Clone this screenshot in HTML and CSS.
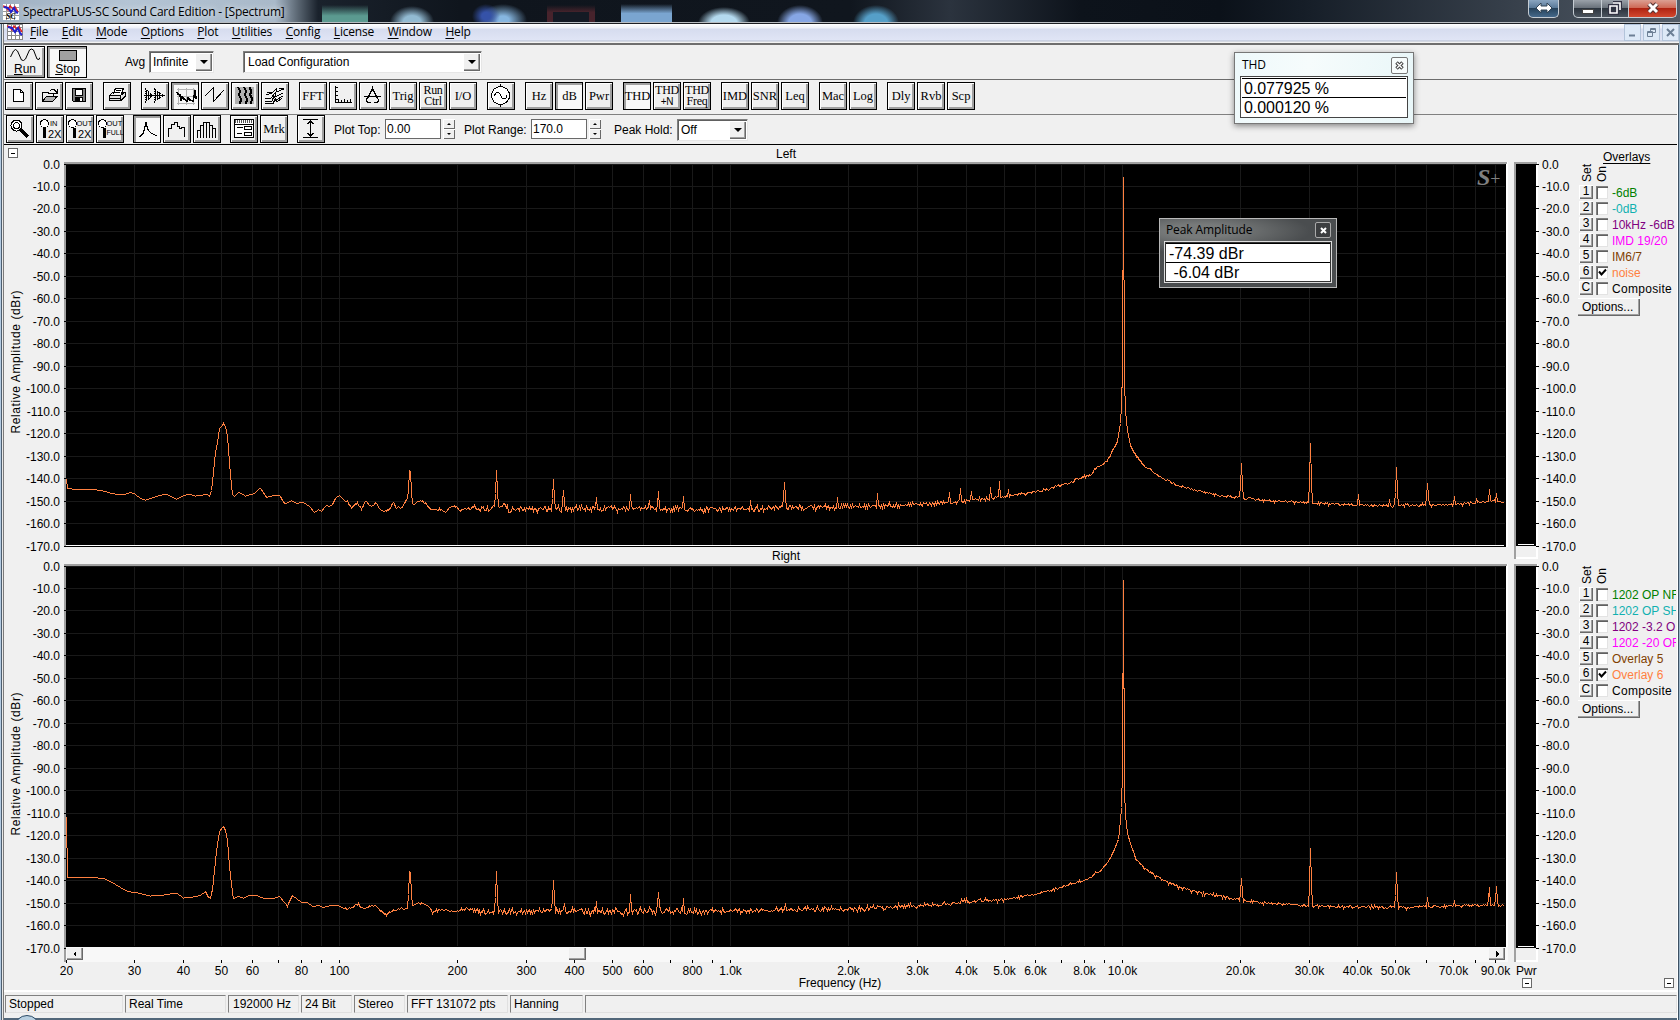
FILE: index.html
```html
<!DOCTYPE html>
<html lang="en">

<head>
    <meta charset="UTF-8">
    <title>SpectraPLUS-SC Sound Card Edition - [Spectrum]</title>
    <link rel="stylesheet" href="styles.css">
</head>

<body>
    <div class="window">
        <!-- Title bar -->
        <header class="titlebar">
            <svg class="app-icon" width="16" height="16" viewBox="0 0 16 16">
                <rect width="16" height="16" fill="#fff" />
                <path d="M3.5 0v16M7.5 0v16M11.5 0v16M0 3.5h16M0 7.5h16M0 11.5h16" stroke="#999" />
                <path d="M0 2l3 1 2 3 2-4 3 3 2-2 3 5" fill="none" stroke="#e02020" stroke-width="1.5" />
                <path d="M1 3l4 1 3 4 3-4 2 4 2 1" fill="none" stroke="#2020d0" stroke-width="2" />
                <text x="3" y="15" class="icon-sc">SC</text>
            </svg>
            <span class="title">SpectraPLUS-SC Sound Card Edition - [Spectrum]</span>
            <div class="caption-buttons">
                <div class="cap resize">
                    <svg width="18" height="12" viewBox="0 0 18 12"><path d="M1 6l5-5v3h6V1l5 5-5 5V8H6v3z" fill="#fff" stroke="#345" /></svg>
                </div>
                <div class="cap minimize">
                    <svg width="14" height="14" viewBox="0 0 14 14"><rect x="1.5" y="8.5" width="11" height="4" fill="#fff" stroke="#444" /></svg>
                </div>
                <div class="cap restore">
                    <svg width="14" height="14" viewBox="0 0 14 14"><path d="M5 2h7v7M2 5h7v7H2z" fill="none" stroke="#334" stroke-width="4" /><path d="M5 2h7v7M2 5h7v7H2z" fill="none" stroke="#fff" stroke-width="1.6" /></svg>
                </div>
                <div class="cap close">
                    <svg width="14" height="12" viewBox="0 0 14 12"><path d="M3 2l8 8M11 2l-8 8" stroke="#533" stroke-width="5" /><path d="M3 2l8 8M11 2l-8 8" stroke="#fff" stroke-width="3" /></svg>
                </div>
            </div>
        </header>

        <!-- Menu -->
        <nav class="menubar">
            <svg class="app-icon" width="16" height="16" viewBox="0 0 16 16">
                <rect width="16" height="16" fill="#fff" />
                <path d="M.5 0v16M4.5 0v16M8.5 0v16M12.5 0v16M0 3.5h16M0 7.5h16M0 11.5h16M0 15.5h16M15.5 0v16M0 .5h16" stroke="#888" />
                <path d="M0 2l3 1 2 3 2-4 3 3 2-2 3 5" fill="none" stroke="#e02020" stroke-width="1.5" />
                <path d="M1 3l4 1 3 4 3-4 2 5 2 2" fill="none" stroke="#2020d0" stroke-width="2" />
            </svg>
            <ul class="menu">
                <li><u>F</u>ile</li>
                <li><u>E</u>dit</li>
                <li><u>M</u>ode</li>
                <li><u>O</u>ptions</li>
                <li><u>P</u>lot</li>
                <li><u>U</u>tilities</li>
                <li><u>C</u>onfig</li>
                <li><u>L</u>icense</li>
                <li><u>W</u>indow</li>
                <li><u>H</u>elp</li>
            </ul>
            <div class="mdi-buttons">
                <div class="mdi"><svg width="9" height="9"><path d="M1 7.5h6" stroke="#6c7f95" stroke-width="2" /></svg></div>
                <div class="mdi"><svg width="9" height="9"><path d="M3.5 3V.5h5v4H6M.5 3.5h5v5h-5zM3 1.5h6M0 4.5h6" fill="none" stroke="#6c7f95" /></svg></div>
                <div class="mdi"><svg width="9" height="9"><path d="M1 1l7 7M8 1L1 8" stroke="#6c7f95" stroke-width="2" /></svg></div>
            </div>
        </nav>

        <!-- Run / stop -->
        <div class="toolbar run-bar">
            <button class="big"><svg width="30" height="14" viewBox="0 0 30 14"><path d="M.5 9l3-6 2-1.5 2 1.5 4 9 2 .5 2-1.5 4-9 2-1 2 1 3.5 9 2 .5 1-2" fill="none" stroke="#000" /></svg><span><u>R</u>un</span></button>
            <button class="big pressed"><svg width="20" height="13"><rect x="1.5" y="1.5" width="17" height="10" fill="#a0a0a0" stroke="#000" /></svg><span><u>S</u>top</span></button>
            <label class="avg">Avg</label>
            <div class="select avg-select"><span>Infinite</span><i class="drop"></i></div>
            <div class="select config-select"><span>Load Configuration</span><i class="drop"></i></div>
        </div>

        <!-- Main tools -->
        <div class="toolbar tools">
            <button><svg class="icon"><path d="M7.5 6.5h7l3 3v9h-10zM14.5 6.5v3h3" fill="#fff" stroke="#000" /></svg></button>
            <button><svg class="icon"><path d="M6.5 18v-9h5l1 1h5v3" fill="#f0f0f0" stroke="#000" /><path d="M6.5 18.5l4-5.5h11l-5 5.5z" fill="#b0b0b0" stroke="#000" /><path d="M14 7.5l2-1h2l3 3M21.5 6v4H18" fill="none" stroke="#000" /></svg></button>
            <button><svg class="icon"><path d="M6.5 5.5h13v13h-12l-1-1z" fill="#808080" stroke="#000" /><path d="M9.5 6h7v6h-7z" fill="#fff" stroke="#000" /><path d="M9 14h8v5H9z" /><path d="M14 15h2v3h-2z" fill="#fff" /></svg></button>

            <button class="group"><svg class="icon"><path d="M9.5 11l2-6h8l-2 6" fill="#fff" stroke="#000" /><path d="M12 7.5h5M11 9.5h5" stroke="#000" /><path d="M5.5 12.5l3-3M18 9.5h3v4l-4 4M5.5 12.5h11v5h-11zM16.5 12.5l4-3" fill="#e0e0e0" stroke="#000" /><path d="M6 15.5h10" stroke="#000" /></svg></button>

            <button class="group"><svg class="icon"><path d="M2 12.5h21" stroke="#000" /><path d="M3 5.5v14l8-7zM12 5.5v14l9-7z" fill="none" stroke="#000" stroke-dasharray="1 1" /><path d="M4.5 7v11M6.5 8v9M8.5 10v5M13.5 7v11M15.5 8v9M17.5 10v5" stroke="#000" /></svg></button>
            <button class="pressed"><svg class="icon"><path d="M5.5 4v17M13.5 4v17M20.5 4v17M4 5.5h18M4 12.5h18M4 19.5h18" stroke="#b4b4b4" /><path d="M4 8l1 2 2 1 1 6 1-4 2 2 3 2 1-3 2 2 3 1 1-4 1-7 1 9" fill="none" stroke="#000" stroke-width="1.6" /></svg></button>
            <button><svg class="icon"><path d="M3 13l8-8v14l11-12" fill="none" stroke="#000" /></svg></button>
            <button><svg class="icon"><rect x="3" y="4" width="19" height="17" fill="#b0b0b0" /><path d="M6 4l2 4-1 4 2 4-1 5M12 4l2 4-1 4 2 4-1 5M18 4l1 5-1 3 2 3-1 6" fill="none" stroke="#000" stroke-width="2" /></svg></button>
            <button><svg class="icon"><path d="M4 12l6-2 4-4v3l8-3M3 15h6l4-5v4l8-4M3 18h7l2-5 2 4 7-4M3 20.5h8l2-4 2 2 5-3M5 9.5h6M17 5.5h5" fill="none" stroke="#000" /></svg></button>

            <button class="group">FFT</button>
            <button><svg class="icon"><path d="M5.5 3v16.5H22M5 4.5h3M5 8.5h3M5 12.5h3M5 16.5h3M8.5 19v-3M11.5 19v-2M14.5 19v-3M17.5 19v-2M20.5 19v-3" fill="none" stroke="#000" /></svg></button>
            <button><svg class="icon"><path d="M12.5 3v4M4 13.5h17M12.5 6l-5 9q-2 3 0 4l3 1M12.5 6l5 9q2 3 0 4l-3 1M10 9.5l2.5-3 2.5 3" fill="none" stroke="#000" stroke-width="1.3" /></svg></button>
            <button>Trig</button>
            <button class="two"><span>Run<br>Ctrl</span></button>
            <button>I/O</button>

            <button class="group"><svg class="icon"><circle cx="12.5" cy="12.5" r="9" fill="#fff" stroke="#000" /><path d="M12.5 1v3M12.5 21v3M6 13l2-3 2-1 2 2 2 4 2 1 2-1 1-3" fill="none" stroke="#000" /></svg></button>

            <button class="group">Hz</button>
            <button class="pressed">dB</button>
            <button>Pwr</button>

            <button class="group pressed">THD</button>
            <button class="two"><span>THD<br><small>+N</small></span></button>
            <button class="two"><span>THD<br>Freq</span></button>

            <button class="group">IMD</button>
            <button>SNR</button>
            <button>Leq</button>

            <button class="group">Mac</button>
            <button>Log</button>

            <button class="group">Dly</button>
            <button>Rvb</button>
            <button>Scp</button>
        </div>

        <!-- Zoom and plot range -->
        <div class="toolbar plot-bar">
            <button><svg class="icon"><circle cx="9.5" cy="9.5" r="5.5" fill="#fff" stroke="#000" /><circle cx="9.5" cy="9.5" r="3" fill="none" stroke="#000" /><path d="M13 13l8 8" stroke="#000" stroke-width="3" /></svg></button>
            <button><svg class="icon"><circle cx="7.5" cy="7.5" r="4" fill="#fff" stroke="#000" /><path d="M7.5 12v10" stroke="#000" stroke-width="3" /><text x="13" y="10" class="zoom-small">IN</text><text x="11" y="22" class="zoom-big">2X</text></svg></button>
            <button><svg class="icon"><circle cx="5.5" cy="7.5" r="4" fill="#fff" stroke="#000" /><path d="M7.5 12v10" stroke="#000" stroke-width="3" /><text x="9.5" y="10" class="zoom-small">OUT</text><text x="11" y="22" class="zoom-big">2X</text></svg></button>
            <button><svg class="icon"><circle cx="5.5" cy="7.5" r="4" fill="#fff" stroke="#000" /><path d="M7.5 12v10" stroke="#000" stroke-width="3" /><text x="9.5" y="10" class="zoom-small">OUT</text><text x="9.5" y="19" class="zoom-small full">FULL</text></svg></button>

            <button class="group9 pressed"><svg class="icon"><path d="M4 20l4-3 3-11 2 7 3 3 6 3" fill="none" stroke="#000" stroke-width="1.3" /></svg></button>
            <button><svg class="icon"><path d="M4.5 21v-9h3V8.5h3V6.5h3v4h2v2h2v-1h3V21" fill="none" stroke="#000" /></svg></button>
            <button><svg class="icon"><path d="M3.5 22v-8h3v8M6.5 14V9.5h3V22M9.5 10V6.5h3V22M12.5 6.5h3V22M15.5 9.5h3V22M18.5 12.5h3V22" fill="none" stroke="#000" /></svg></button>

            <button class="group9"><svg class="icon"><path d="M3.5 3.5h19v18h-19z" fill="#fff" stroke="#000" /><path d="M4 5.5h18" stroke="#555" stroke-width="3" stroke-dasharray="1 1" /><path d="M3 8.5h20M6 11.5h6M6 17.5h5M13.5 10.5h7v3h-7zM13.5 16.5h7v3h-7z" fill="none" stroke="#000" /></svg></button>
            <button>Mrk</button>

            <button class="group9"><svg class="icon"><path d="M5 3.5h15M5 21.5h15M12.5 4v17M9.5 8l3-3 3 3M9.5 17l3 3 3-3" fill="none" stroke="#000" /></svg></button>

            <label class="plot-top">Plot Top:</label>
            <div class="field">0.00</div>
            <div class="spinner"><i class="up"></i><i class="down"></i></div>
            <label class="plot-range">Plot Range:</label>
            <div class="field">170.0</div>
            <div class="spinner"><i class="up"></i><i class="down"></i></div>
            <label class="peak-hold">Peak Hold:</label>
            <div class="select hold-select"><span>Off</span><i class="drop"></i></div>
        </div>

        <!-- Spectrum, left channel -->
        <section class="channel left">
            <svg class="plot" id="plotLeft" width="1504" height="402" viewBox="4 145 1504 402"></svg>
            <svg class="meter" id="meterLeft" width="70" height="402" viewBox="1508 145 70 402"></svg>
            <aside class="overlays">
                <h3>Overlays</h3>
                <div class="heads"><span>Set</span><span>On</span></div>
                <ul>
                    <li class="green"><b>1</b><i></i>-6dB</li>
                    <li class="teal"><b>2</b><i></i>-0dB</li>
                    <li class="purple"><b>3</b><i></i>10kHz -6dB</li>
                    <li class="magenta"><b>4</b><i></i>IMD 19/20</li>
                    <li class="brown"><b>5</b><i></i>IM6/7</li>
                    <li class="orange"><b>6</b><i><svg width="9" height="9"><path d="M1 3.5l2.5 3L8 1.5" fill="none" stroke="#000" stroke-width="2" /></svg></i>noise</li>
                    <li class="composite"><b>C</b><i></i>Composite</li>
                </ul>
                <div class="options">Options...</div>
            </aside>
        </section>

        <!-- Spectrum, right channel -->
        <section class="channel right">
            <svg class="plot" id="plotRight" width="1504" height="443" viewBox="4 547 1504 443"></svg>
            <svg class="meter" id="meterRight" width="70" height="443" viewBox="1508 547 70 443"></svg>
            <aside class="overlays">
                <h3></h3>
                <div class="heads"><span>Set</span><span>On</span></div>
                <ul>
                    <li class="green"><b>1</b><i></i>1202 OP NF</li>
                    <li class="teal"><b>2</b><i></i>1202 OP SH</li>
                    <li class="purple"><b>3</b><i></i>1202 -3.2 O</li>
                    <li class="magenta"><b>4</b><i></i>1202 -20 OF</li>
                    <li class="brown"><b>5</b><i></i>Overlay 5</li>
                    <li class="orange"><b>6</b><i><svg width="9" height="9"><path d="M1 3.5l2.5 3L8 1.5" fill="none" stroke="#000" stroke-width="2" /></svg></i>Overlay 6</li>
                    <li class="composite"><b>C</b><i></i>Composite</li>
                </ul>
                <div class="options">Options...</div>
                <div class="collapse"></div>
            </aside>
        </section>

        <!-- Status bar -->
        <footer class="statusbar">
            <div class="pane w118">Stopped</div>
            <div class="pane w101">Real Time</div>
            <div class="pane w71">192000 Hz</div>
            <div class="pane w51">24 Bit</div>
            <div class="pane w51">Stereo</div>
            <div class="pane w101">FFT 131072 pts</div>
            <div class="pane w73">Hanning</div>
            <div class="pane rest"></div>
        </footer>
        <div class="orb"></div>

        <!-- Floating readouts -->
        <div class="float thd">
            <div class="float-title"><span>THD</span><div class="float-close"><svg width="9" height="9"><path d="M1.5 1.5l6 6M7.5 1.5l-6 6" stroke="#444" stroke-width="3.5" /><path d="M2 2l5 5M7 2L2 7" stroke="#fff" stroke-width="1.3" /></svg></div></div>
            <div class="values"><div>0.077925 %</div><div>0.000120 %</div></div>
        </div>
        <div class="float peak">
            <div class="float-title"><span>Peak Amplitude</span><div class="float-close"><svg width="9" height="9"><path d="M2 2l5 5M7 2L2 7" stroke="#fff" stroke-width="2" /></svg></div></div>
            <div class="values"><div>-74.39 dBr</div><div>&nbsp;-6.04 dBr</div></div>
        </div>
    </div>

    <script src="script.js"></script>
</body>

</html>
```
FILE: styles.css
```css
* {
    box-sizing: border-box;
}

body {
    margin: 0;
    width: 1680px;
    height: 1020px;
    overflow: hidden;
    background: #f0f0f0;
    font-family: "Liberation Sans", Arial, sans-serif;
    font-size: 12px;
    color: #000;
}

ul {
    list-style: none;
    margin: 0;
    padding: 0;
}

svg {
    display: block;
    flex: none;
}

.window {
    position: relative;
    width: 1680px;
    height: 1020px;
    display: flex;
    flex-direction: column;
    border-left: 1px solid #b4cbe2;
    box-shadow: inset 1px 0 #4d5f70, inset 2px 0 #e8e8e8, inset 3px 0 #7b7b7b, inset -1px 0 #9ab4c8, inset -2px 0 #3d5163, inset -3px 0 #fff;
    padding: 0 3px;
}

/* title bar */
.titlebar {
    height: 24px;
    margin: 0 -3px 0 -4px;
    padding-left: 3px;
    display: flex;
    align-items: center;
    border-bottom: 1px solid #1c1f24;
    box-shadow: inset 0 -1px #b9bdc2;
    background:
        linear-gradient(transparent, #5b9a90 60%) 322px 5px / 46px 18px no-repeat,
        radial-gradient(ellipse 22px 16px at 412px 22px, #92bad2 40%, transparent),
        radial-gradient(ellipse 14px 12px at 486px 16px, #3552a8 30%, transparent),
        radial-gradient(ellipse 24px 16px at 503px 20px, #86b6e0 25%, transparent),
        linear-gradient(#141a24, #141a24) 553px 12px / 36px 11px no-repeat,
        linear-gradient(transparent, #47232c 40%) 547px 5px / 48px 18px no-repeat,
        linear-gradient(transparent, #7aa5d0 50%) 621px 4px / 51px 19px no-repeat,
        radial-gradient(ellipse 26px 16px at 724px 23px, #b4d9ee 50%, transparent),
        radial-gradient(ellipse 23px 18px at 800px 23px, #86a6e4 50%, transparent),
        radial-gradient(ellipse 23px 18px at 876px 23px, #559fc8 50%, transparent),
        linear-gradient(90deg, #9fb0c2 0, #b4c4d4 130px, #a9b9c9 275px, #5a6672 298px, #1a222c 318px, #0f151d 460px, #10161e 850px, #2b333e 950px, #0d131b 1080px, #0b1119 1220px, #151d27 1300px, #3a434e 1530px, #525c68 1680px);
}

.title {
    font-family: "Open Sans", "Noto Sans", sans-serif;
    font-size: 12px;
    letter-spacing: -0.22px;
    margin-left: 4px;
    white-space: nowrap;
    text-shadow: 0 0 6px #fff;
}

.icon-sc {
    font: italic bold 8px "Liberation Serif", serif;
}

.caption-buttons {
    margin-left: auto;
    height: 24px;
    display: flex;
    align-items: flex-start;
    padding-right: 3px;
}

.cap {
    height: 18px;
    display: flex;
    align-items: center;
    justify-content: center;
    border: 1px solid #c5ccd3;
    border-top: 0;
    background: linear-gradient(#9aa1a9, #6a727b 45%, #2c343e 50%, #4b545e);
}

.resize {
    width: 31px;
    margin-right: 14px;
    border-radius: 0 0 5px 5px;
    background: linear-gradient(#8aa5c0, #5a7a99 45%, #27435c 50%, #44688a);
}

.minimize {
    width: 29px;
    border-radius: 0 0 0 5px;
}

.restore {
    width: 27px;
    border-left: 0;
}

.close {
    width: 48px;
    border-left: 0;
    border-radius: 0 0 5px 0;
    background: linear-gradient(#dba093, #cf6a57 45%, #b02412 50%, #d2482e);
}

/* menu */
.menubar {
    height: 21px;
    padding: 0 0 0 3px;
    margin: 0 -2px 0 0;
    display: flex;
    background: linear-gradient(#fff 0, #edf0f8 4px, #d6dcef 5px, #e0e5f5 16px, #b4bdd0 17px, #f4f4f4 18px, #f0f0f0 19px, #6e6e6e 19px);
    font-family: "Open Sans", "Noto Sans", sans-serif;
}

.menu {
    display: flex;
    margin-left: 7px;
    line-height: 16px;
    letter-spacing: -0.18px;
}

.menu li {
    margin-right: 13.5px;
}

.menu u {
    text-underline-offset: 2px;
}

.mdi-buttons {
    margin-left: auto;
    display: flex;
    gap: 2px;
}

.mdi {
    width: 17px;
    height: 17px;
    display: flex;
    align-items: center;
    justify-content: center;
    border: 1px solid #b3c4da;
    background: #dde9f7;
}

/* toolbars */
.toolbar {
    display: flex;
    align-items: flex-start;
    border-bottom: 1px solid #6c6c6c;
}

.run-bar {
    height: 35px;
    padding: 1px 0 0 1px;
}

.tools {
    height: 35px;
    padding: 2px 0 0 1px;
    border-bottom-color: #808080;
}

.plot-bar {
    height: 30px;
    padding: 0 0 0 2px;
    border-bottom-color: #000;
}

button {
    flex: none;
    width: 28px;
    height: 28px;
    margin: 0 2px 0 0;
    padding: 0;
    display: flex;
    align-items: center;
    justify-content: center;
    border: 1px solid #000;
    background: #f0f0f0;
    box-shadow: inset 1px 1px #fff, inset -2px -2px #a0a0a0;
    font: 12.5px/11px "Liberation Serif", serif;
    color: #000;
    overflow: hidden;
}

button.pressed {
    background: #f8f8f8;
    box-shadow: inset 2px 2px #a0a0a0;
    padding: 1px 0 0 1px;
}

button.group {
    margin-left: 8px;
}

button.group9 {
    margin-left: 7px;
}

button.two {
    font-size: 12px;
    line-height: 11px;
    letter-spacing: -0.3px;
}

button small {
    font: 10px/9px "Liberation Sans", sans-serif;
}

button.big {
    width: 40px;
    height: 32px;
    flex-direction: column;
    font: 12px/14px "Liberation Sans", sans-serif;
}

.icon {
    width: 26px;
    height: 26px;
    shape-rendering: crispEdges;
}

.zoom-small {
    font: 7.5px "Liberation Sans", sans-serif;
}

.zoom-small.full {
    font-size: 7px;
}

.zoom-big {
    font: 11px "Liberation Sans", sans-serif;
}

.avg {
    margin: 9px 4px 0 36px;
    width: 20px;
    white-space: nowrap;
    letter-spacing: -0.2px;
}

.select {
    height: 22px;
    margin-top: 5px;
    padding: 1px;
    display: flex;
    align-items: center;
    justify-content: space-between;
    background: #fff;
    border: 1px solid #808080;
    border-right-color: #e6e6e6;
    border-bottom-color: #e6e6e6;
    box-shadow: inset 1px 1px #606060;
}

.select span {
    padding-left: 2px;
}

.config-select span {
    padding-left: 3px;
}

.avg-select {
    width: 65px;
}

.config-select {
    width: 239px;
    margin-left: 29px;
}

.hold-select {
    width: 71px;
    margin-top: 4px;
}

.drop {
    width: 17px;
    height: 18px;
    background: #f0f0f0;
    box-shadow: inset 1px 1px #fff, inset -1px -1px #696969, inset -2px -2px #a0a0a0;
    display: flex;
    align-items: center;
    justify-content: center;
}

.drop::after {
    content: "";
    border: 4px solid transparent;
    border-top-color: #000;
    border-bottom: 0;
}

.plot-bar label {
    margin-top: 8px;
    white-space: nowrap;
}

.plot-top {
    margin-left: 7px;
    width: 51px;
}

.plot-range {
    margin-left: 9px;
    width: 67px;
}

.peak-hold {
    margin-left: 13px;
    width: 63px;
}

.field {
    width: 56px;
    height: 20px;
    margin: 4px 2px 0 0;
    padding: 2px 0 0 1px;
    background: #fff;
    border: 1px solid #696969;
}

.spinner {
    width: 12px;
    margin-top: 4px;
}

.spinner i {
    display: flex;
    align-items: center;
    justify-content: center;
    height: 10px;
    background: #f0f0f0;
    box-shadow: inset 1px 1px #fff, inset -1px -1px #696969;
}

.spinner i::after {
    content: "";
    border: 2px solid transparent;
}

.spinner .up::after {
    border-bottom-color: #000;
    border-top: 0;
}

.spinner .down::after {
    border-top-color: #000;
    border-bottom: 0;
}

/* plots */
.channel {
    display: flex;
}

.left {
    height: 402px;
}

.right {
    height: 443px;
}

.plot,
.meter {
    shape-rendering: crispEdges;
    overflow: visible;
}

.plot text,
.meter text {
    font: 12px "Liberation Sans", Arial, sans-serif;
}

.plot .logo {
    font: italic bold 24px "Liberation Serif", serif;
    fill: #808080;
}

.plot .logo .plus {
    font-size: 18px;
    font-style: normal;
    font-weight: normal;
}

.grid {
    stroke: #191919;
    fill: none;
}

.trace {
    stroke: #ff8040;
    fill: none;
}

.end {
    text-anchor: end;
}

.middle {
    text-anchor: middle;
}

.overlays {
    width: 98px;
    overflow: hidden;
    position: relative;
}

.overlays h3 {
    margin: 5px 0 0 25px;
    width: 48px;
    height: 14px;
    font-size: 12px;
    font-weight: normal;
    line-height: 14px;
    text-decoration: underline;
    text-underline-offset: 2px;
}

.heads {
    display: flex;
    height: 20px;
    gap: 1px;
    padding-left: 2px;
}

.heads span {
    writing-mode: vertical-rl;
    transform: rotate(180deg);
    line-height: 14px;
    padding-top: 2px;
    height: 20px;
}

.overlays li {
    display: flex;
    align-items: center;
    height: 16px;
    padding-top: 1px;
    white-space: nowrap;
}

.overlays b {
    flex: none;
    width: 14px;
    height: 14px;
    margin: -1px 3px 0 1px;
    color: #000;
    font-weight: normal;
    line-height: 13px;
    text-align: center;
    box-shadow: inset 1px 1px #fff, inset -1px -1px #696969, inset -2px -2px #a0a0a0;
}

.overlays li i {
    flex: none;
    width: 12px;
    height: 13px;
    margin-right: 4px;
    padding: 2px;
    background: #fff;
    box-shadow: inset 1px 1px #808080, inset 2px 2px #606060, inset -1px -1px #e3e3e3;
}

.composite {
    letter-spacing: 0.3px;
}

.options {
    width: 64px;
    height: 18px;
    margin: 2px 0 0 -2px;
    padding-left: 6px;
    line-height: 18px;
    box-shadow: inset 1px 1px #fff, inset -1px -1px #696969, inset -2px -2px #a0a0a0;
}

.collapse {
    position: absolute;
    right: 2px;
    bottom: 2px;
    width: 10px;
    height: 10px;
    border: 1px solid #696969;
    background: #fff linear-gradient(#000, #000) 2px 4px / 4px 1px no-repeat;
}

.green { color: #008000; }
.teal { color: #10b0b0; }
.purple { color: #800080; }
.magenta { color: #ff00ff; }
.brown { color: #804000; }
.orange { color: #ff8040; }

/* status bar */
.statusbar {
    height: 30px;
    padding: 3px 0 0 1px;
    display: flex;
    gap: 2px;
    border-top: 2px solid #fff;
    border-bottom: 2px solid #52677a;
}

.pane {
    flex: none;
    height: 18px;
    padding: 1px 0 0 3px;
    white-space: nowrap;
    border: 1px solid #808080;
    border-right-color: #e0e0e0;
    border-bottom-color: #e0e0e0;
}

.w118 { width: 118px; }
.w101 { width: 101px; }
.w71 { width: 71px; padding-left: 4px; }
.w51 { width: 51px; }
.w73 { width: 73px; }

.rest {
    flex: 1;
}

.orb {
    position: absolute;
    left: 13px;
    top: 1015px;
    width: 26px;
    height: 26px;
    border-radius: 50%;
    border: 1px solid #2a4a66;
    background: #b7cfe0;
}

/* floating windows */
.float {
    position: absolute;
    padding: 0 6px;
    border: 1px solid #777;
}

.thd {
    left: 1233px;
    top: 52px;
    width: 180px;
    height: 72px;
    padding: 0 5px;
    background: linear-gradient(100deg, #eef9fb, #f6fcfc 40%, #e8f6f8);
    box-shadow: 0 2px 6px rgba(0, 0, 0, 0.45);
}

.peak {
    left: 1158px;
    top: 218px;
    width: 178px;
    height: 70px;
    padding: 0 4px;
    background: radial-gradient(ellipse 110px 22px at 40px 12px, #777a7a 30%, #4a4d4f);
    border-color: #b8b8b8;
}

.float-title {
    height: 23px;
    display: flex;
    justify-content: space-between;
    align-items: center;
    padding-left: 2px;
    font-family: "Open Sans", "Noto Sans", sans-serif;
    letter-spacing: -0.1px;
}

.peak .float-title {
    height: 22px;
    padding-left: 2px;
    line-height: 21px;
    align-items: flex-start;
}

.float-close {
    width: 17px;
    height: 17px;
    margin-top: 2px;
    display: flex;
    align-items: center;
    justify-content: center;
    border: 1px solid #777;
    border-radius: 2px;
    background: #f7fcfc;
}

.peak .float-close {
    width: 16px;
    height: 16px;
    margin: 3px 1px 0 0;
    border-color: #aaa;
    background: #3c3e40;
}

.values {
    border: 1px solid #444;
    height: 42px;
    padding: 1px;
    background: #fff;
    font-size: 16px;
}

.values div {
    height: 19px;
    padding-left: 3px;
    line-height: 19px;
    border-top: 1px solid #000;
}

.thd .values div {
    padding-left: 2px;
    letter-spacing: -0.05px;
}

.peak .values {
    height: 42px;
    border-color: #ddd;
    box-shadow: inset 0 0 0 1px #333;
}
```
FILE: script.js
```javascript
const DECADE = 391.5;
const TRACE_END = 1504;

// baseline points [x, y], then narrow peaks [x, y]
const leftTrace = {
    seed: 7,
    base: [[66, 479], [67, 488], [76, 489], [93, 489], [103, 490.5], [110, 492.5], [117, 494], [124, 494], [130, 492], [134, 493], [140, 498], [145, 499.5], [150, 498], [157, 495.5], [166, 493.5], [171, 496], [176, 498.5], [182, 495.5], [188, 493.5], [195, 495.5], [201, 495], [206, 493.5], [209, 495.5], [211, 490], [213, 472], [215, 452], [217, 442], [219, 428], [221, 426], [223, 423], [225, 426], [227, 436], [229, 462], [231, 485], [232, 494], [234, 495.5], [238, 491.5], [245, 495.5], [254, 493], [260, 487.5], [266, 497], [271, 495.5], [279, 494.5], [284, 503], [286, 503], [291, 500], [297, 503], [302, 501.5], [309, 506], [314, 512], [318, 509], [321, 511], [326, 504.5], [329, 506], [332, 504], [336, 496.5], [339, 495], [343, 499], [347, 501], [351, 507], [357, 502], [361, 509], [365, 501], [369, 505], [376, 503], [379, 509], [385, 511], [390, 508], [393, 501], [396, 507], [402, 507], [405, 500], [407, 499], [412, 503], [423, 501], [430, 508], [437, 509], [446, 511], [453, 505], [459, 510], [470, 508], [492, 508], [500, 504], [508, 509], [560, 508.5], [640, 507.5], [700, 509], [760, 508], [850, 506], [900, 504.5], [950, 502], [1000, 496.5], [1025, 493], [1050, 488], [1068, 483], [1076, 479], [1090, 475], [1095, 468], [1103, 463], [1107, 460], [1111, 452], [1117, 441], [1120, 423], [1121, 405], [1122, 370], [1123, 177], [1124, 380], [1125, 410], [1127, 430], [1130, 445], [1134, 453], [1144, 466], [1155, 473], [1162, 478], [1180, 486], [1200, 491], [1220, 495], [1240, 497], [1260, 499], [1290, 501.5], [1308, 502.5], [1340, 504], [1380, 505], [1430, 504.5], [1450, 504], [1480, 502], [1498, 500], [1504, 503]],
    peaks: [[409, 470], [410, 471], [496, 470], [553, 479], [563, 490], [596, 497], [630, 494], [649, 500], [658, 491], [683, 496], [750, 500], [784, 482], [837, 497], [877, 493], [949, 492], [960, 488], [971, 491], [990, 487], [999, 481], [1008, 489], [1241, 463], [1310, 443], [1358, 494], [1389, 499], [1396, 467], [1427, 483], [1454, 496], [1476, 498], [1489, 489], [1496, 493]]
};

const rightTrace = {
    seed: 23,
    base: [[66, 817], [67, 877], [77, 876.5], [92, 877], [104, 878], [115, 884], [127, 891], [135, 892], [150, 895.5], [160, 895], [172, 893], [177, 893], [183, 897.5], [190, 897], [200, 895], [205, 891], [208, 897], [210, 897.5], [212, 889], [214, 870], [216, 851], [219, 831], [221, 828], [223, 825.5], [225, 830], [227, 840], [229, 866], [232, 892], [233, 898], [238, 896], [243, 897.5], [248, 895], [256, 895], [264, 898], [273, 898], [279, 896], [287, 905.5], [292, 895], [301, 902], [307, 902], [312, 906], [318, 905], [323, 907], [330, 905], [336, 904.5], [344, 908], [352, 907], [358, 904], [364, 908], [370, 906], [375, 905], [380, 910], [385, 914], [392, 910], [400, 908], [406, 908], [412, 906], [418, 903], [423, 903], [428, 906], [432, 912], [440, 909], [453, 911], [467, 908], [475, 911], [560, 911], [700, 911], [800, 909], [850, 908.5], [900, 906], [940, 904], [960, 901], [1000, 899], [1030, 895], [1050, 890], [1070, 883.5], [1084, 880], [1100, 869.5], [1107, 862], [1113, 851], [1118, 839], [1120, 820], [1121, 807], [1122, 770], [1123, 580], [1124, 790], [1125, 815], [1127, 833], [1131, 846], [1137, 861], [1146, 869], [1155, 875], [1163, 880], [1180, 887], [1200, 892.5], [1220, 896], [1240, 900], [1260, 902], [1300, 905], [1350, 906.5], [1400, 907], [1440, 906], [1480, 904.5], [1504, 906]],
    peaks: [[409, 871], [410, 872], [496, 871], [553, 880], [564, 903], [596, 901], [630, 894], [658, 892], [683, 898], [785, 903], [1241, 878], [1310, 848], [1396, 872], [1427, 897], [1454, 900], [1489, 887], [1496, 886]]
};

function freqX(hz) {
    return Math.max(66, Math.floor(65.6 + Math.log10(hz / 20) * DECADE));
}

function dbY(top, n) {
    return Math.floor(top + n * 22.49);
}

function noiseSize(x) {
    if (x < 345) return 0;
    if (x < 470) return 1.2;
    if (x < 720) return 3;
    if (x < 900) return 2.4;
    if (x < 1010) return 1.8;
    if (x > 1110 && x < 1135) return 0;
    return 1.3;
}

function tracePath(data) {
    let seed = data.seed;
    const random = () => {
        seed = (seed * 16807) % 2147483647;
        return seed / 2147483647;
    };
    let i = 0;
    let d = '';
    for (let x = 66; x <= TRACE_END; x++) {
        while (i < data.base.length - 2 && data.base[i + 1][0] <= x) i++;
        const [x0, y0] = data.base[i];
        const [x1, y1] = data.base[i + 1];
        let y = y0 + (y1 - y0) * (x - x0) / (x1 - x0);
        y += (random() + random() - 1) * noiseSize(x) * 1.4;
        const peak = data.peaks.find(p => p[0] === x);
        const foot = data.peaks.find(p => p[0] === x - 1 || p[0] === x + 1);
        if (peak) {
            y = peak[1];
        } else if (foot && y - foot[1] > 18) {
            y = y - (y - foot[1]) * 0.35;
        }
        d += (d ? 'L' : 'M') + (x + 0.5) + ' ' + (Math.round(y) + 0.5);
    }
    return d;
}

function raised(x, y, w, h) {
    return `<rect x="${x}" y="${y}" width="${w}" height="${h}" fill="#696969"/>
        <rect x="${x}" y="${y}" width="${w - 1}" height="${h - 1}" fill="#a0a0a0"/>
        <rect x="${x}" y="${y}" width="${w - 2}" height="${h - 2}" fill="#f0f0f0"/>`;
}

function collapseBox(x, y) {
    return `<rect x="${x + 0.5}" y="${y + 0.5}" width="9" height="9" fill="#fff" stroke="#696969"/>
        <path d="M${x + 3} ${y + 5.5}h4" stroke="#000"/>`;
}

function drawPlot(id, name, top, data, last) {
    const bottom = last ? 947 : top + 383;
    const frameBottom = last ? 962 : top + 383;
    let s = `<text class="middle" x="786" y="${top - 6}">${name}</text>`;
    s += `<rect x="64" y="${top - 2}" width="1444" height="${frameBottom - top + 2}" fill="#fff"/>`;
    s += `<path d="M64 ${top - 1}H1507M65 ${top - 2}V${frameBottom}" stroke="#a0a0a0" stroke-width="2"/>`;
    s += `<rect x="66" y="${top}" width="1440" height="${bottom - top}" fill="#000"/>`;

    for (let n = 0; n < 17; n++) {
        s += `<path class="grid" d="M66 ${dbY(top, n) + 0.5}H1505"/>`;
    }
    for (let k = 10; k <= 10000; k *= 10) {
        for (let m = 1; m <= 9; m++) {
            if (m * k > 20 && m * k < 95000) {
                s += `<path class="grid" d="M${freqX(m * k) + 0.5} ${top}V${bottom - 1}"/>`;
            }
        }
    }
    for (let n = 0; n <= 17; n++) {
        const y = dbY(top, n);
        s += `<path d="M64 ${y + 0.5}h2" stroke="#000"/>`;
        s += `<text class="end" x="60" y="${y + 5}">${n ? '-' + n * 10 : '0'}.0</text>`;
    }
    s += `<text class="middle" transform="translate(20 ${top + 198}) rotate(-90)" textLength="143">Relative Amplitude (dBr)</text>`;
    s += `<path class="trace" d="${tracePath(data)}"/>`;

    if (!last) {
        s += `<path d="M66 ${bottom - 1.5}H1504" stroke="#fff"/>`;
        s += `<text class="logo" x="1477" y="185">S<tspan class="plus">+</tspan></text>`;
        s += collapseBox(8, 148);
    } else {
        s += `<rect x="66" y="947" width="1442" height="15" fill="#f8f8f8"/>`;
        s += raised(67, 948, 16, 12) + raised(569, 948, 17, 12) + raised(1489, 948, 16, 12);
        s += '<path d="M76 951v6l-3-3zM1496 951v6l3-3z"/>';
        const labels = { 20: '20', 30: '30', 40: '40', 50: '50', 60: '60', 80: '80', 100: '100', 200: '200', 300: '300', 400: '400', 500: '500', 600: '600', 800: '800', 1000: '1.0k', 2000: '2.0k', 3000: '3.0k', 4000: '4.0k', 5000: '5.0k', 6000: '6.0k', 8000: '8.0k', 10000: '10.0k', 20000: '20.0k', 30000: '30.0k', 40000: '40.0k', 50000: '50.0k', 70000: '70.0k', 90000: '90.0k' };
        for (let k = 10; k <= 10000; k *= 10) {
            for (let m = 1; m <= 9; m++) {
                const hz = m * k;
                if (hz < 20) continue;
                s += `<path d="M${freqX(hz) + 0.5} 960v3" stroke="#000"/>`;
                if (labels[hz]) s += `<text class="middle" x="${freqX(hz) + 0.5}" y="975">${labels[hz]}</text>`;
            }
        }
        s += '<text class="middle" x="840" y="987">Frequency (Hz)</text>';
    }
    document.getElementById(id).innerHTML = s;
}

function drawMeter(id, top, last) {
    const bottom = last ? 948 : top + 382;
    const frame = last ? 962 : top + 395;
    let s = `<rect x="1514" y="${top - 2}" width="24" height="${frame - top + 2}" fill="#fff"/>`;
    s += `<rect x="1516" y="${top}" width="20" height="${frame - top - 2}" fill="#f0f0f0"/>`;
    s += `<path d="M1514 ${top - 1}H1537M1515 ${top - 2}V${frame}" stroke="#a0a0a0" stroke-width="2"/>`;
    s += `<rect x="1516" y="${top}" width="20" height="${bottom - top}" fill="#000"/>`;
    s += `<path d="M1518 ${bottom - 1.5}h16" stroke="#fff"/>`;
    for (let n = 0; n <= 17; n++) {
        const y = dbY(top, n);
        s += `<path d="M1536 ${y + 0.5}h3" stroke="#000"/>`;
        s += `<text x="1542" y="${y + 5}">${n ? '-' + n * 10 : '0'}.0</text>`;
    }
    if (last) {
        s += '<text x="1516" y="975">Pwr</text>' + collapseBox(1522, 978);
    }
    document.getElementById(id).innerHTML = s;
}

drawPlot('plotLeft', 'Left', 164, leftTrace, false);
drawMeter('meterLeft', 164, false);
drawPlot('plotRight', 'Right', 566, rightTrace, true);
drawMeter('meterRight', 566, true);
```
